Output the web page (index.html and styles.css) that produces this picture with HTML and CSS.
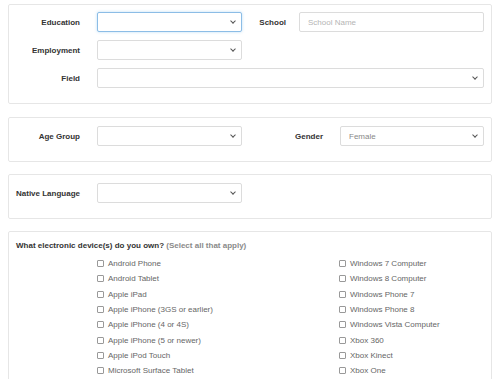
FILE: index.html
```html
<!DOCTYPE html>
<html lang="en">
<head>
    <meta charset="UTF-8">
    <title>Profile</title>
    <link rel="stylesheet" href="styles.css">
</head>
<body>

<form class="profile-form">

    <section class="panel panel-main">
        <label class="field-label">Education</label>
        <span class="select-wrap"><select class="field-select focused"><option></option></select></span>
        <label class="field-label school-label">School</label>
        <input class="field-input" type="text" placeholder="School Name">

        <label class="field-label">Employment</label>
        <span class="select-wrap"><select class="field-select"><option></option></select></span>
        <span></span><span></span>

        <label class="field-label">Field</label>
        <span class="select-wrap wide"><select class="field-select"><option></option></select></span>
    </section>

    <section class="panel panel-row">
        <label class="field-label">Age Group</label>
        <span class="select-wrap"><select class="field-select"><option></option></select></span>
        <label class="field-label">Gender</label>
        <span class="select-wrap"><select class="field-select"><option>Female</option></select></span>
    </section>

    <section class="panel panel-row">
        <label class="field-label">Native Language</label>
        <span class="select-wrap"><select class="field-select"><option></option></select></span>
    </section>

    <section class="panel panel-devices">
        <p class="question">What electronic device(s) do you own? <span class="hint">(Select all that apply)</span></p>
        <div class="device-cols">
            <ul class="device-list">
                <li><input type="checkbox"> Android Phone</li>
                <li><input type="checkbox"> Android Tablet</li>
                <li><input type="checkbox"> Apple iPad</li>
                <li><input type="checkbox"> Apple iPhone (3GS or earlier)</li>
                <li><input type="checkbox"> Apple iPhone (4 or 4S)</li>
                <li><input type="checkbox"> Apple iPhone (5 or newer)</li>
                <li><input type="checkbox"> Apple iPod Touch</li>
                <li><input type="checkbox"> Microsoft Surface Tablet</li>
            </ul>
            <ul class="device-list">
                <li><input type="checkbox"> Windows 7 Computer</li>
                <li><input type="checkbox"> Windows 8 Computer</li>
                <li><input type="checkbox"> Windows Phone 7</li>
                <li><input type="checkbox"> Windows Phone 8</li>
                <li><input type="checkbox"> Windows Vista Computer</li>
                <li><input type="checkbox"> Xbox 360</li>
                <li><input type="checkbox"> Xbox Kinect</li>
                <li><input type="checkbox"> Xbox One</li>
            </ul>
        </div>
    </section>

</form>

</body>
</html>
```

FILE: styles.css
```css
html, body {
    overflow: hidden;
}

body {
    font-family: 'Liberation Sans', Arial, sans-serif;
    font-size: 8px;
    color: #333;
    background: #fff;
    margin: 0;
    padding: 4px 8px 0 8px;
}

.profile-form {
    display: flex;
    flex-direction: column;
    gap: 12px;
}

.panel {
    border: 1px solid #e6e6e6;
    border-radius: 2px;
    background: #fff;
}

.panel-main {
    display: grid;
    grid-template-columns: 88px 145px 1fr 185px;
    row-gap: 8px;
    align-items: center;
    padding: 7px 7px 15px 0;
    margin-bottom: 1px;
}

.panel-row {
    display: grid;
    grid-template-columns: 88px 145px 1fr 144px;
    align-items: center;
    padding: 8px 7px 15px 0;
}

.field-label {
    font-weight: bold;
    text-align: right;
    padding-right: 17px;
    white-space: nowrap;
}

.school-label {
    padding-right: 13px;
}

.select-wrap {
    position: relative;
    display: block;
    height: 20px;
}

.select-wrap.wide {
    grid-column: 2 / 5;
}

.select-wrap::after {
    content: "";
    position: absolute;
    right: 7px;
    top: 7px;
    width: 3px;
    height: 3px;
    border-right: 1px solid #555;
    border-bottom: 1px solid #555;
    transform: rotate(45deg);
    pointer-events: none;
}

.field-select,
.field-input {
    appearance: none;
    -webkit-appearance: none;
    box-sizing: border-box;
    width: 100%;
    height: 20px;
    margin: 0;
    padding: 0 8px;
    font-family: inherit;
    font-size: 8px;
    color: #888;
    background: #fff;
    border: 1px solid #dcdcdc;
    border-radius: 2px;
    outline: none;
}

.field-input::placeholder {
    color: #b5b5b5;
}

.field-select.focused {
    border-color: #8cbde6;
    box-shadow: 0 0 3px rgba(102, 175, 233, 0.45);
}

.panel-devices {
    padding: 9px 7px 0 7px;
    height: 200px;
}

.question {
    font-weight: bold;
    margin: 0 0 6px 0;
}

.hint {
    color: #8a8a8a;
}

.device-cols {
    display: grid;
    grid-template-columns: 242px 1fr;
    padding-left: 81px;
}

.device-list {
    list-style: none;
    margin: 0;
    padding: 0;
}

.device-list li {
    display: flex;
    align-items: center;
    gap: 4px;
    height: 15.3px;
    color: #666;
}

.device-list input {
    appearance: none;
    -webkit-appearance: none;
    width: 7px;
    height: 7px;
    margin: 0;
    border: 1px solid #999;
    border-radius: 1px;
    background: #fff;
}
```
